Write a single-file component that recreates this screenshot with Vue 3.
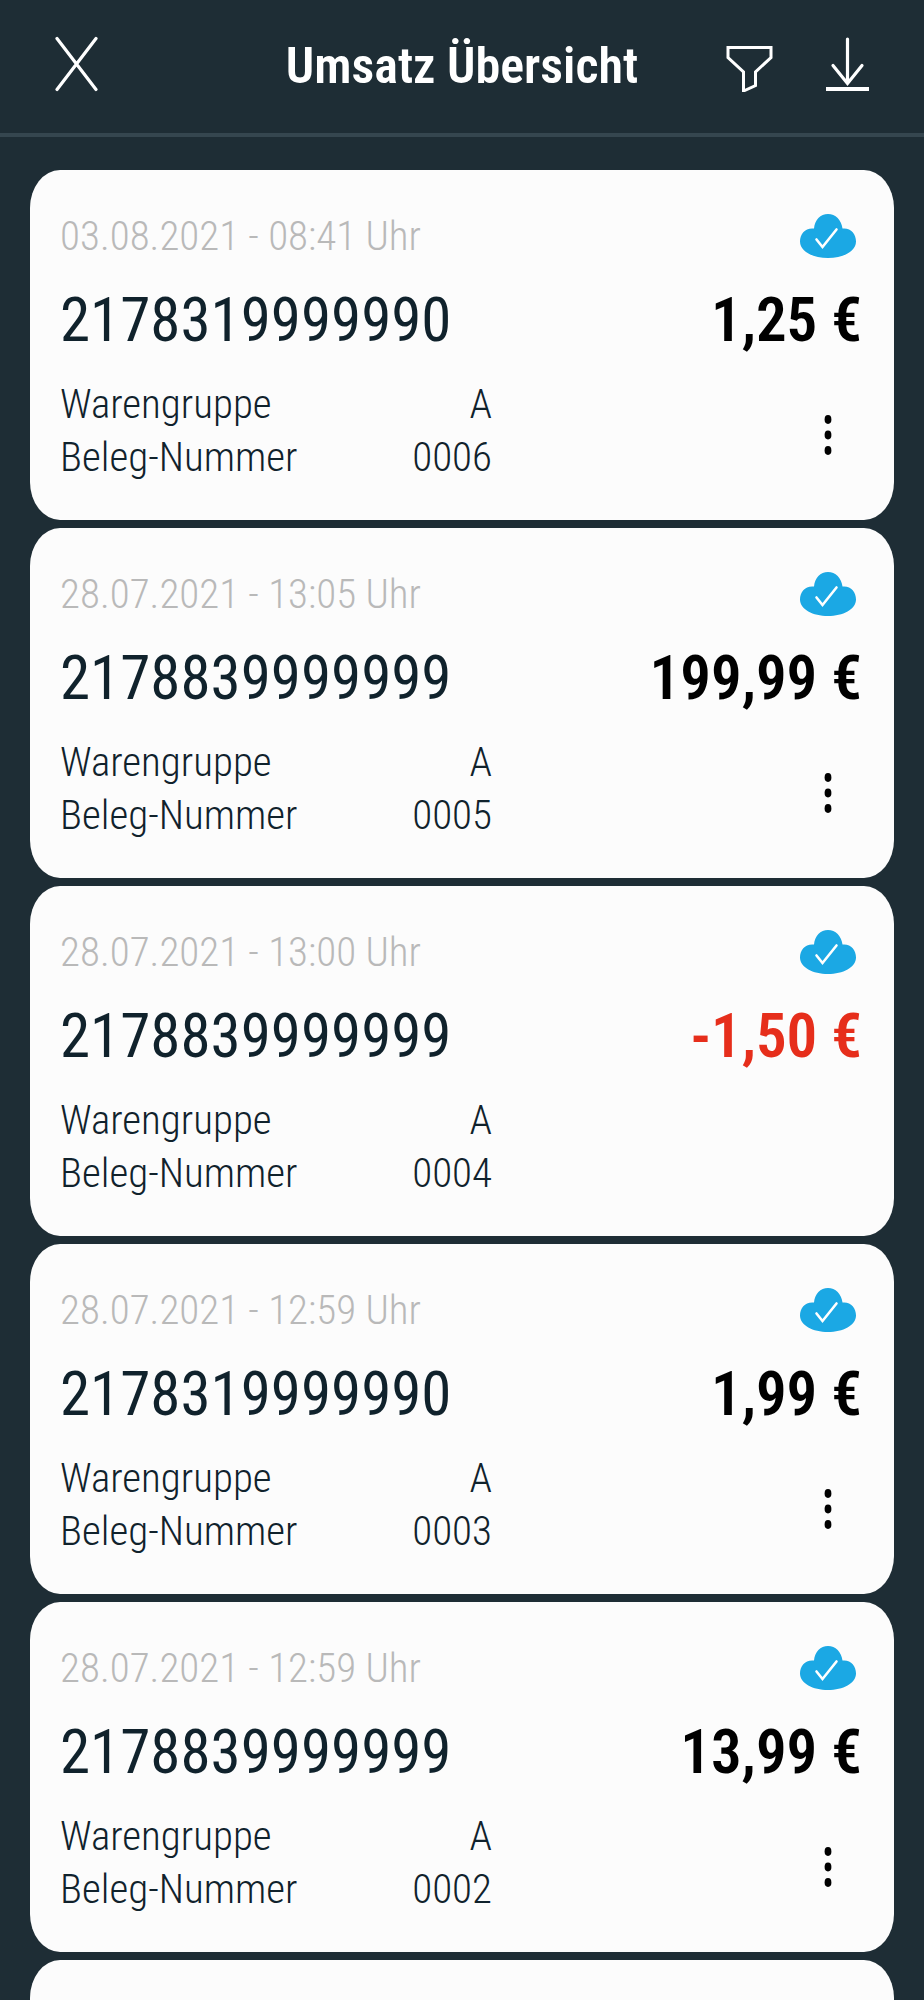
<script setup>
const receipts = [
  { id: 1, date: '03.08.2021 - 08:41 Uhr', number: '2178319999990', amount: '1,25 €', receipt: '0006', menu: true },
  { id: 2, date: '28.07.2021 - 13:05 Uhr', number: '2178839999999', amount: '199,99 €', receipt: '0005', menu: true },
  { id: 3, date: '28.07.2021 - 13:00 Uhr', number: '2178839999999', amount: '-1,50 €', receipt: '0004', menu: false },
  { id: 4, date: '28.07.2021 - 12:59 Uhr', number: '2178319999990', amount: '1,99 €', receipt: '0003', menu: true },
  { id: 5, date: '28.07.2021 - 12:59 Uhr', number: '2178839999999', amount: '13,99 €', receipt: '0002', menu: true },
]
</script>

<template>
  <div class="screen">
    <header class="bar">
      <div class="side">
        <button type="button" class="icon-btn" aria-label="Schließen">
          <svg width="44" height="56" viewBox="0 0 44 56" fill="none" stroke="#fff" stroke-width="3.2" stroke-linecap="round">
            <path d="M3 2.500 42 53.500M42 2.500 3 53.500" />
          </svg>
        </button>
      </div>
      <h1 class="title">Umsatz Übersicht</h1>
      <div class="side end">
        <button type="button" class="icon-btn" aria-label="Filtern">
          <svg width="48" height="56" viewBox="0 0 48 56" fill="none" stroke="#fff" stroke-width="3">
            <path d="M2 11.500H45V21.500L29.500 36V49.500L17.500 55V36L2 21.500Z" />
          </svg>
        </button>
        <button type="button" class="icon-btn" aria-label="Herunterladen">
          <svg width="44" height="56" viewBox="0 0 44 56" fill="none" stroke="#fff" stroke-width="3.2" stroke-linecap="round">
            <path d="M21.500 3V47M7 29.500 21.500 47.500 36 29.500" />
            <path d="M0 53H43" stroke-width="4" stroke-linecap="butt" />
          </svg>
        </button>
      </div>
    </header>

    <main class="list">
      <article v-for="r in receipts" :key="r.id" class="card">
        <div class="row top">
          <time class="date">{{ r.date }}</time>
          <svg class="cloud" width="56" height="44" viewBox="0 0 56 44" role="img" aria-label="Synchronisiert">
            <path
              fill="#1ba8e4"
              d="M14 14.500C14.500 6 20.500 0 28 0S41.500 6 42.500 14.500C50.500 13.500 56 19.500 56 27.500C56 37.500 43 44 28 44S0 37.500 0 27.500C0 19.500 5.500 13.500 14 14.500Z"
            />
            <path d="M16.500 25.500 22.500 33 36.500 15.500" fill="none" stroke="#fff" stroke-width="2.600" stroke-linecap="round" />
          </svg>
        </div>
        <div class="row main">
          <span class="number">{{ r.number }}</span>
          <strong class="amount" :class="{ negative: r.amount.startsWith('-') }">{{ r.amount }}</strong>
        </div>
        <div class="row bottom">
          <dl class="details">
            <div class="pair"><dt>Warengruppe</dt><dd>A</dd></div>
            <div class="pair"><dt>Beleg-Nummer</dt><dd>{{ r.receipt }}</dd></div>
          </dl>
          <button v-if="r.menu" type="button" class="icon-btn more" aria-label="Weitere Aktionen">
            <svg width="68" height="48" viewBox="0 0 68 48">
              <ellipse cx="34" cy="8.500" rx="3.400" ry="4.400" />
              <ellipse cx="34" cy="24" rx="3.400" ry="4.400" />
              <ellipse cx="34" cy="39.500" rx="3.400" ry="4.400" />
            </svg>
          </button>
        </div>
      </article>
      <article class="card next" aria-hidden="true"></article>
    </main>
  </div>
</template>

<style>
body {
  background: #1e2d35;
}
</style>

<style scoped>
.screen {
  height: 100vh;
  overflow: hidden;
  background: #1e2d35;
  font-family: "Roboto Condensed", "Liberation Sans Narrow", Roboto, sans-serif;
  color: #10222c;
}
.bar {
  display: grid;
  grid-template-columns: 1fr auto 1fr;
  align-items: center;
  box-sizing: border-box;
  height: 137px;
  padding: 0 54px 6px;
  border-bottom: 4px solid #35464f;
}
.side {
  display: flex;
}
.side.end {
  justify-content: flex-end;
  gap: 52px;
}
.icon-btn {
  display: block;
  padding: 0;
  border: 0;
  background: none;
  cursor: pointer;
}
.icon-btn svg {
  display: block;
}
.more {
  padding-top: 8px;
}
.title {
  margin: 0;
  padding-top: 4px;
  font-size: 50px;
  line-height: 64px;
  font-weight: 600;
  color: #fff;
}
.list {
  display: flex;
  flex-direction: column;
  gap: 8px;
  padding: 33px 30px 0;
}
.card {
  box-sizing: border-box;
  min-height: 350px;
  padding: 42px 32px 36px 30px;
  border-radius: 30px / 38px;
  background: #fcfcfc;
}
.row {
  display: flex;
  align-items: center;
  justify-content: space-between;
}
.top {
  height: 48px;
  padding-right: 6px;
}
.date {
  font-size: 41px;
  line-height: 48px;
  font-weight: 300;
  color: #b9b9b9;
}
.main {
  margin: 24px 0 22px;
  font-size: 61px;
  line-height: 72px;
}
.amount {
  font-weight: 600;
  color: #000;
}
.amount.negative {
  color: #e62e1b;
}
.details {
  flex: 0 1 432px;
  margin: 0;
  font-size: 41px;
  line-height: 53px;
  font-weight: 300;
}
.pair {
  display: flex;
  justify-content: space-between;
}
.pair dd {
  margin: 0;
}
</style>
